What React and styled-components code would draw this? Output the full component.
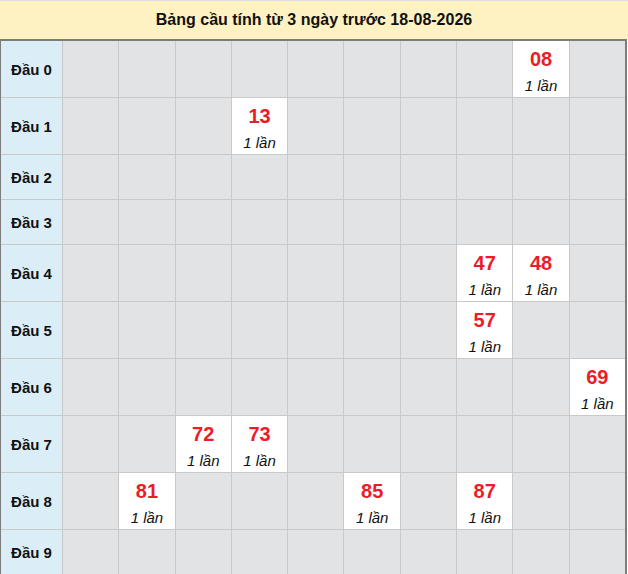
import React from 'react';
import styled, { createGlobalStyle } from 'styled-components';

const GlobalStyle = createGlobalStyle`
  body {
    margin: 0;
    background: #ffffff;
    font-family: 'Liberation Sans', Arial, sans-serif;
  }
`;

const Wrapper = styled.section`
  width: 628px;
  height: 574px;
  overflow: hidden;
`;

const Title = styled.div`
  height: 38px;
  border-top: 1px solid #dcdcdc;
  background: #fff2c2;
  display: flex;
  align-items: center;
  justify-content: center;
  font-size: 16px;
  font-weight: 700;
  color: #111;
`;

const Table = styled.div`
  width: 624px;
  border-top: 2px solid #7c7c7c;
  border-left: 1px solid #7c7c7c;
  border-right: 2px solid #7c7c7c;
  background: #c9c9c9;
  display: grid;
  grid-template-columns: 61px repeat(10, 1fr);
  gap: 1px;
`;

const Label = styled.div`
  height: ${({ $tall }) => ($tall ? '56px' : '44px')};
  background: #dbeef8;
  display: flex;
  align-items: center;
  justify-content: center;
  font-size: 15px;
  font-weight: 700;
  color: #111;
`;

const Cell = styled.div`
  height: ${({ $tall }) => ($tall ? '56px' : '44px')};
  background: ${({ $hit }) => ($hit ? '#ffffff' : '#e2e3e5')};
  display: flex;
  flex-direction: column;
  align-items: center;
  justify-content: center;
`;

const Lotto = styled.span`
  font-size: 20px;
  font-weight: 700;
  line-height: 24px;
  color: #ec1c28;
  margin-top: 4px;
`;

const Count = styled.span`
  font-size: 15px;
  font-style: italic;
  line-height: 20px;
  margin-top: 5px;
  color: #111;
`;

const hits = {
  0: ['08'],
  1: ['13'],
  4: ['47', '48'],
  5: ['57'],
  6: ['69'],
  7: ['72', '73'],
  8: ['81', '85', '87'],
};

const App = () => {
  const rows = Array.from({ length: 10 }, (_, i) => i);
  const cols = Array.from({ length: 10 }, (_, i) => i);

  return (
    <Wrapper>
      <GlobalStyle />
      <Title>Bảng cầu tính từ 3 ngày trước 18-08-2026</Title>
      <Table>
        {rows.map((r) => {
          const list = hits[r] || [];
          const tall = list.length > 0;
          return (
            <React.Fragment key={r}>
              <Label $tall={tall}>Đầu {r}</Label>
              {cols.map((c) => {
                const num = list.find((n) => parseInt(n[1], 10) === c);
                return (
                  <Cell key={c} $tall={tall} $hit={!!num}>
                    {num && (
                      <>
                        <Lotto>{num}</Lotto>
                        <Count>1 lần</Count>
                      </>
                    )}
                  </Cell>
                );
              })}
            </React.Fragment>
          );
        })}
      </Table>
    </Wrapper>
  );
};

export default App;
